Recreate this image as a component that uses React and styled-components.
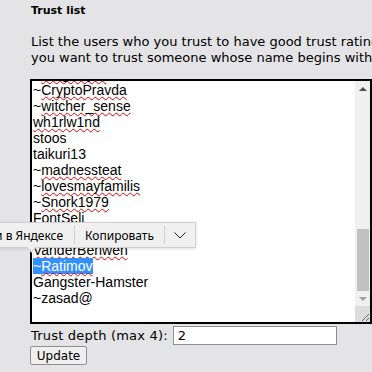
import React from 'react'
import styled, { createGlobalStyle } from 'styled-components'

const GlobalStyle = createGlobalStyle`
  html, body {
    margin: 0;
    padding: 0;
    background: #e4e4e6;
  }
`

const Page = styled.div`
  position: relative;
  width: 372px;
  height: 372px;
  overflow: hidden;
  box-sizing: border-box;
  padding-left: 30px;
  font-family: "DejaVu Sans", Verdana, sans-serif;
  color: #000;
`

const Heading = styled.h3`
  margin: 4px 0 0 1px;
  font-size: 11px;
  line-height: 13px;
  font-weight: bold;
`

const Intro = styled.p`
  margin: 17px 0 0 1px;
  font-size: 13px;
  line-height: 16px;
  white-space: nowrap;
`

const ListBox = styled.div`
  margin-top: 13px;
  width: 342px;
  height: 245px;
  box-sizing: border-box;
  border: 2px solid #000;
  background: #fff;
  display: flex;
  overflow: hidden;
`

const Lines = styled.div`
  flex: 1;
  margin-top: -15px;
  padding-left: 1px;
  font-family: "Liberation Sans", Arial, sans-serif;
  font-size: 14px;
  line-height: 16px;
`

const Line = styled.div`
  white-space: nowrap;
`

const Misspelled = styled.span`
  text-decoration: underline wavy #e00000;
  text-decoration-thickness: 1px;
  text-underline-offset: 1px;
  text-decoration-skip-ink: none;
`

const Selected = styled.span`
  background: #3390ff;
  color: #fff;
`

const Scrollbar = styled.div`
  width: 15px;
  display: flex;
  flex-direction: column;
  background: #f0f0f0;
`

const ArrowButton = styled.div`
  height: 15px;
  display: flex;
  align-items: center;
  justify-content: center;
`

const Track = styled.div`
  flex: 1;
  display: flex;
  flex-direction: column;
  justify-content: flex-end;
  padding: 0 1px 0 2px;
`

const Thumb = styled.div`
  height: 62px;
  background: #c1c1c1;
`

const Corner = styled.div`
  height: 16px;
  background: #dcdcdc;
  display: flex;
  align-items: flex-end;
  justify-content: flex-end;
`

const DepthRow = styled.div`
  display: flex;
  align-items: center;
  margin-top: 2px;
  margin-left: 1px;
  font-size: 13px;
`

const DepthLabel = styled.span`
  letter-spacing: 0.2px;
`

const DepthInput = styled.input`
  width: 164px;
  height: 19px;
  box-sizing: border-box;
  margin: 0 0 0 5px;
  padding: 0 4px;
  border: 1px solid #8f8f8f;
  background: #fff;
  font-family: "DejaVu Sans", Verdana, sans-serif;
  font-size: 13px;
`

const UpdateButton = styled.button`
  display: block;
  margin-top: 1px;
  height: 19px;
  width: 57px;
  padding: 0;
  border: 1px solid #8f8f8f;
  border-radius: 2px;
  background: #efefef;
  color: #000;
  font-family: "DejaVu Sans", Verdana, sans-serif;
  font-size: 12px;
`

const Toolbar = styled.div`
  position: absolute;
  right: 176px;
  top: 222px;
  height: 26px;
  display: flex;
  align-items: center;
  box-sizing: border-box;
  background: #f0f0f0;
  border: 1px solid #cfcfcf;
  box-shadow: 0 1px 3px rgba(0, 0, 0, 0.12);
  font-family: "Noto Sans", "Open Sans", sans-serif;
  font-size: 12px;
  color: #000;
`

const ToolItem = styled.div`
  padding: 0 ${p => p.$pad}px;
  white-space: nowrap;
  display: flex;
  align-items: center;
`

const ToolSep = styled.div`
  width: 1px;
  height: 18px;
  background: #cfcfcf;
`

const Tail = styled.div`
  position: absolute;
  left: 28px;
  top: 244px;
  width: 6px;
  height: 6px;
  background: #f0f0f0;
  border-right: 1px solid #cfcfcf;
  border-bottom: 1px solid #cfcfcf;
  transform: rotate(45deg);
`

const names = [
  { tilde: true, name: 'Kingslayer', bad: true },
  { tilde: true, name: 'CryptoPravda', bad: true },
  { tilde: true, name: 'witcher_sense', bad: true },
  { name: 'wh1rlw1nd', bad: true },
  { name: 'stoos' },
  { name: 'taikuri13' },
  { tilde: true, name: 'madnessteat', bad: true },
  { tilde: true, name: 'lovesmayfamilis', bad: true },
  { tilde: true, name: 'Snork1979', bad: true },
  { name: 'FontSeli' },
  { name: 'Nemo_Seller', bad: true },
  { name: 'VanderBenwen', bad: true },
  { tilde: true, name: 'Ratimov', bad: true, selected: true },
  { name: 'Gangster-Hamster' },
  { tilde: true, name: 'zasad@' },
  { name: '' },
]

function Entry({ item }) {
  const word = item.bad ? <Misspelled>{item.name}</Misspelled> : item.name
  const body = (
    <>
      {item.tilde ? '~' : ''}
      {word}
    </>
  )
  return <Line>{item.selected ? <Selected>{body}</Selected> : body}{!item.name && '\u00a0'}</Line>
}

export default function App() {
  return (
    <Page>
      <GlobalStyle />
      <Heading>Trust list</Heading>
      <Intro>
        List the users who you trust to have good trust ratings. If
        <br />
        you want to trust someone whose name begins with ~, add it here.
      </Intro>

      <ListBox>
        <Lines>
          {names.map((item, i) => (
            <Entry key={i} item={item} />
          ))}
        </Lines>
        <Scrollbar>
          <ArrowButton>
            <svg width="8" height="4" viewBox="0 0 8 4">
              <path d="M0 4 L4 0 L8 4 Z" fill="#505050" />
            </svg>
          </ArrowButton>
          <Track>
            <Thumb />
          </Track>
          <ArrowButton>
            <svg width="8" height="4" viewBox="0 0 8 4">
              <path d="M0 0 L8 0 L4 4 Z" fill="#a3a3a3" />
            </svg>
          </ArrowButton>
          <Corner>
            <svg width="12" height="12" viewBox="0 0 12 12">
              <path d="M11 4 L4 11 M11 8 L8 11" stroke="#6b6b6b" strokeWidth="1" />
            </svg>
          </Corner>
        </Scrollbar>
      </ListBox>

      <DepthRow>
        <DepthLabel>Trust depth (max 4):</DepthLabel>
        <DepthInput defaultValue="2" />
      </DepthRow>
      <UpdateButton>Update</UpdateButton>

      <Toolbar>
        <ToolItem $pad={11}>Найти в Яндексе</ToolItem>
        <ToolSep />
        <ToolItem $pad={10}>Копировать</ToolItem>
        <ToolSep />
        <ToolItem $pad={9}>
          <svg width="12" height="7" viewBox="0 0 12 7">
            <path d="M0.5 0.5 L6 6 L11.5 0.5" fill="none" stroke="#222" strokeWidth="1" />
          </svg>
        </ToolItem>
      </Toolbar>
      <Tail />
    </Page>
  )
}
